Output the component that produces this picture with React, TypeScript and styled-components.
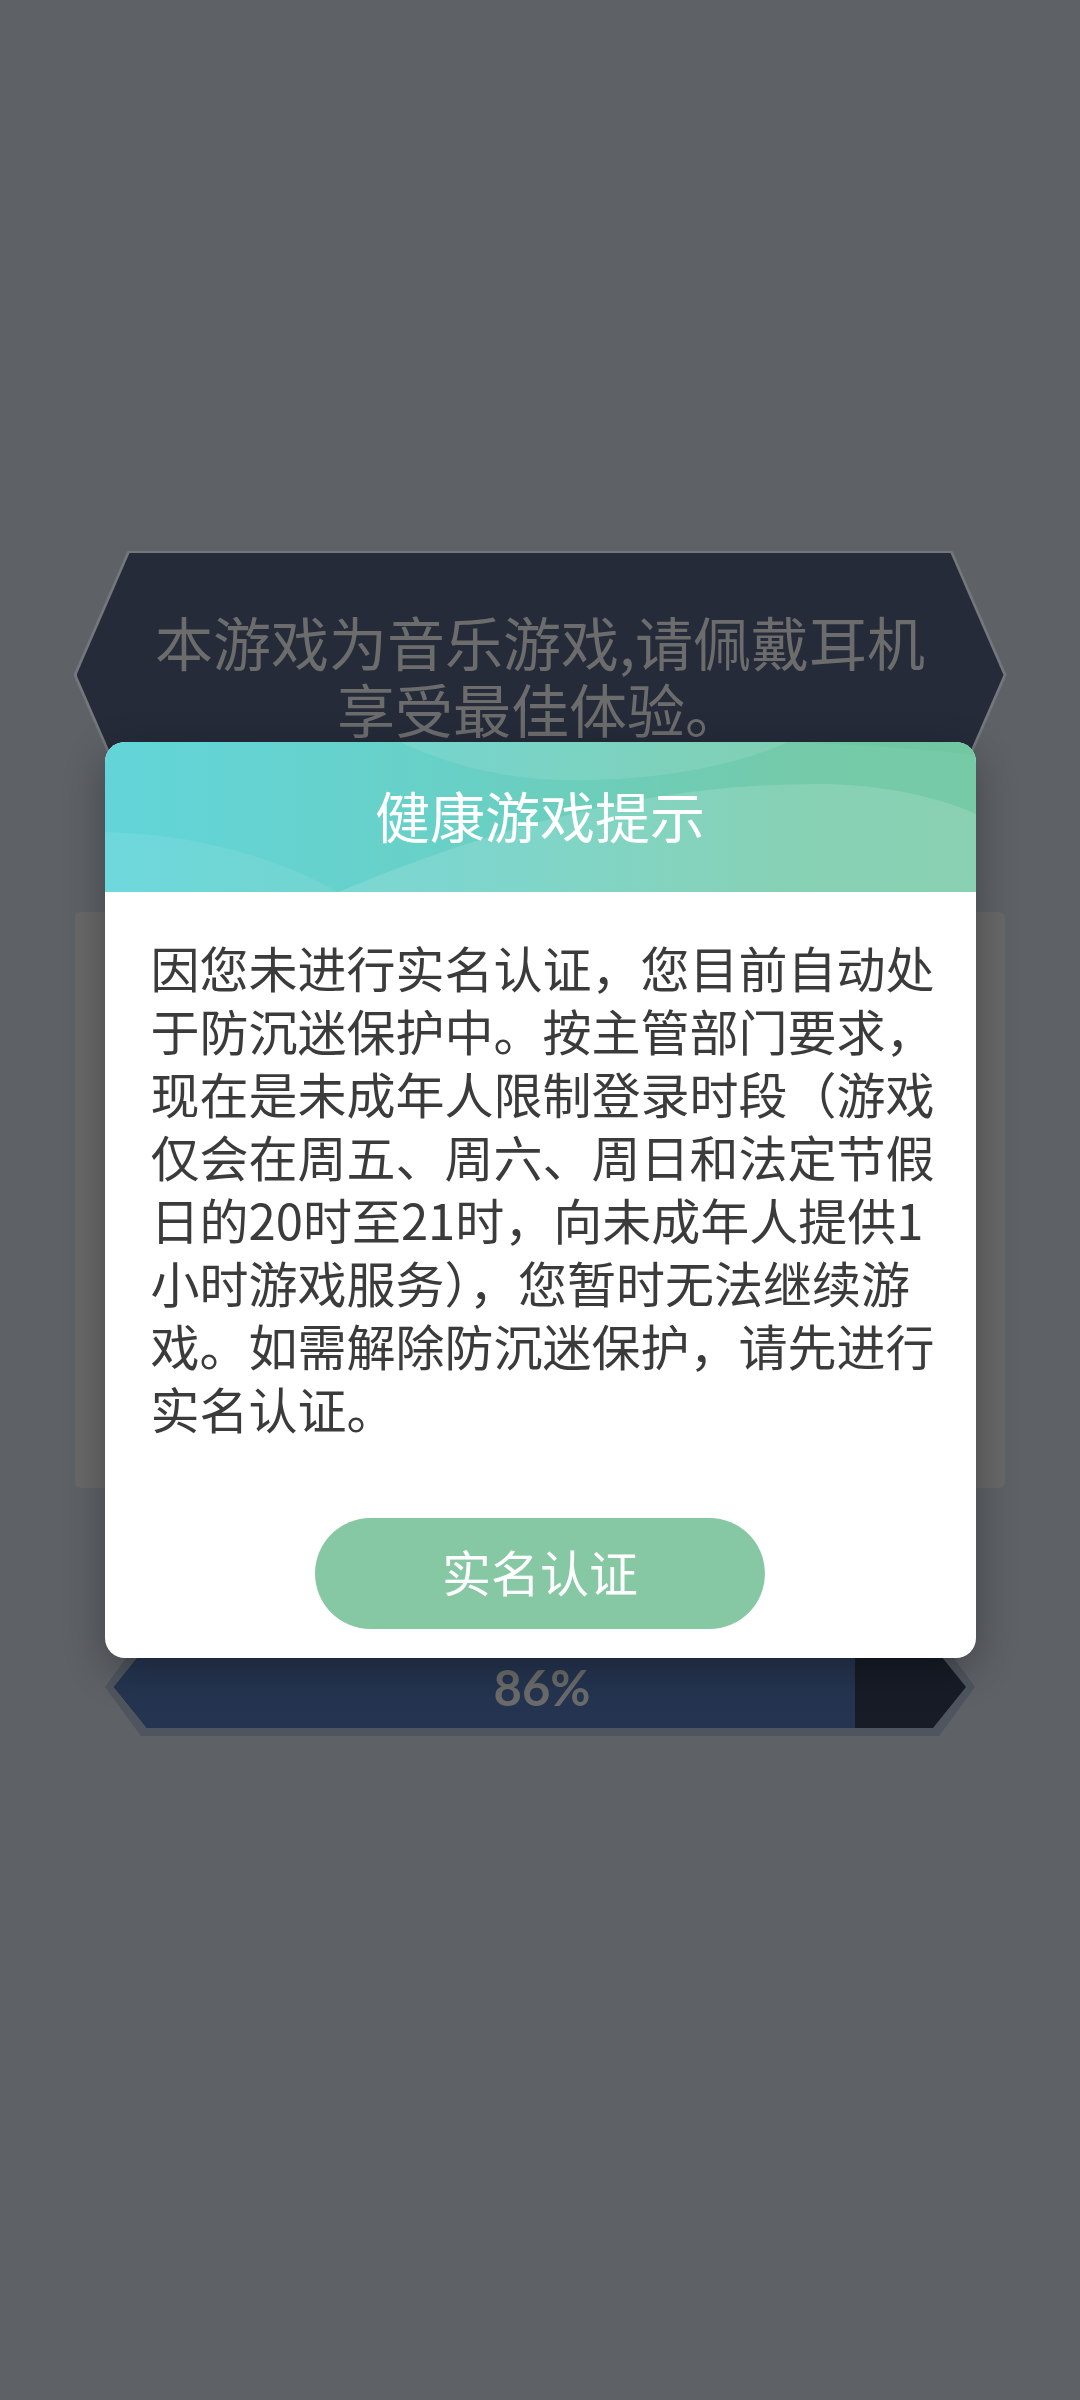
import styled, { createGlobalStyle } from "styled-components";

const GlobalStyle = createGlobalStyle`
    html, body {
        margin: 0;
        padding: 0;
        background: #5e6166;
    }
    * {
        box-sizing: border-box;
    }
`

const CJK = `"Noto Sans CJK SC", "Noto Sans", sans-serif`;

const Screen = styled.div`
    min-height: 2400px;
    padding-top: 551px;
    display: flex;
    flex-direction: column;
    align-items: center;
    font-family: ${CJK};
`
const Banner = styled.div`
    width: 933px;
    height: 248px;
    padding: 2px 3px;
    display: flex;
    background: #74777b;
    clip-path: polygon(0 124px, 54px 0, 879px 0, 933px 124px, 879px 248px, 54px 248px);
`
const BannerInner = styled.div`
    flex: 1;
    display: flex;
    align-items: center;
    justify-content: center;
    text-align: center;
    background: #252b39;
    clip-path: polygon(0 122px, 53px 0, 874px 0, 927px 122px, 874px 244px, 53px 244px);
    color: #6c6c6c;
    font-size: 58px;
    line-height: 67px;
`
const Panel = styled.div`
    margin-top: 113px;
    width: 930px;
    height: 576px;
    background: #686868;
    border-radius: 6px;
`
const BarFrame = styled.div`
    margin-top: 150px;
    width: 870px;
    height: 98px;
    padding: 8px 9px;
    display: flex;
    background: #4f555e;
    clip-path: polygon(0 49px, 36px 0, 834px 0, 870px 49px, 834px 98px, 36px 98px);
`
const BarTrack = styled.div`
    flex: 1;
    display: grid;
    background: #171c27;
    clip-path: polygon(0 41px, 33px 0, 819px 0, 852px 41px, 819px 82px, 33px 82px);
    & > * {
        grid-area: 1 / 1;
    }
`
const BarFill = styled.div`
    height: 100%;
    background: #253551;
`
const BarLabel = styled.div`
    align-self: center;
    justify-self: center;
    color: #6c6c6c;
    font-family: Lato, "Open Sans", sans-serif;
    font-size: 49px;
    font-weight: 700;
    line-height: 1;
    margin-left: 4px;
`

const Overlay = styled.div`
    position: fixed;
    inset: 0;
    display: flex;
    align-items: center;
    justify-content: center;
    font-family: ${CJK};
`
const Dialog = styled.div`
    width: 871px;
    background: #ffffff;
    border-radius: 20px;
    overflow: hidden;
    box-shadow: 0 12px 40px rgba(0, 0, 0, 0.3);
    display: flex;
    flex-direction: column;
`
const DialogHeader = styled.div`
    position: relative;
    height: 150px;
    padding-bottom: 6px;
    display: flex;
    align-items: center;
    justify-content: center;
    background: linear-gradient(90deg, #62d5d9 0%, #68d0c6 40%, #74caa9 80%, #77caa6 100%);
`
const HeaderWaves = styled.svg`
    position: absolute;
    inset: 0;
    width: 100%;
    height: 100%;
`
const DialogTitle = styled.h2`
    position: relative;
    margin: 0;
    color: #ffffff;
    font-size: 55px;
    font-weight: 400;
    line-height: 1;
`
const DialogText = styled.p`
    margin: 0;
    padding: 43px 38px 0 46px;
    color: #3b3b3b;
    font-size: 49px;
    line-height: 63px;
    text-align: left;
`
const ConfirmBtn = styled.button`
    margin: 79px auto 29px;
    width: 450px;
    height: 111px;
    padding: 0 0 6px;
    border: none;
    border-radius: 56px;
    background: #86c8a3;
    color: #ffffff;
    font-family: ${CJK};
    font-size: 49px;
    display: flex;
    align-items: center;
    justify-content: center;
    cursor: pointer;
`

const progress = 87;

const App = () => {
    return (
        <>
            <GlobalStyle />
            <Screen>
                <Banner>
                    <BannerInner>
                        本游戏为音乐游戏,请佩戴耳机
                        <br />
                        享受最佳体验。
                    </BannerInner>
                </Banner>
                <Panel />
                <BarFrame>
                    <BarTrack>
                        <BarFill style={{ width: `${progress}%` }} />
                        <BarLabel>86%</BarLabel>
                    </BarTrack>
                </BarFrame>
            </Screen>
            <Overlay>
                <Dialog>
                    <DialogHeader>
                        <HeaderWaves viewBox="0 0 871 150" preserveAspectRatio="none">
                            <path d="M295 0 C360 30 420 40 490 38 C570 36 640 20 683 0 Z" fill="#ffffff" opacity="0.1" />
                            <path d="M683 0 L871 0 L871 13 C800 5 740 2 683 0 Z" fill="#5fbf92" opacity="0.25" />
                            <path d="M233 150 C400 80 560 40 722 42 C790 44 840 58 871 72 L871 150 Z" fill="#ffffff" opacity="0.14" />
                            <path d="M0 90 C90 92 170 115 233 150 L0 150 Z" fill="#ffffff" opacity="0.08" />
                        </HeaderWaves>
                        <DialogTitle>健康游戏提示</DialogTitle>
                    </DialogHeader>
                    <DialogText>
                        因您未进行实名认证，您目前自动处于防沉迷保护中。按主管部门要求，现在是未成年人限制登录时段（游戏仅会在周五、周六、周日和法定节假日的20时至21时，向未成年人提供1小时游戏服务），您暂时无法继续游戏。如需解除防沉迷保护，请先进行实名认证。
                    </DialogText>
                    <ConfirmBtn>实名认证</ConfirmBtn>
                </Dialog>
            </Overlay>
        </>
    );
};

export default App;
